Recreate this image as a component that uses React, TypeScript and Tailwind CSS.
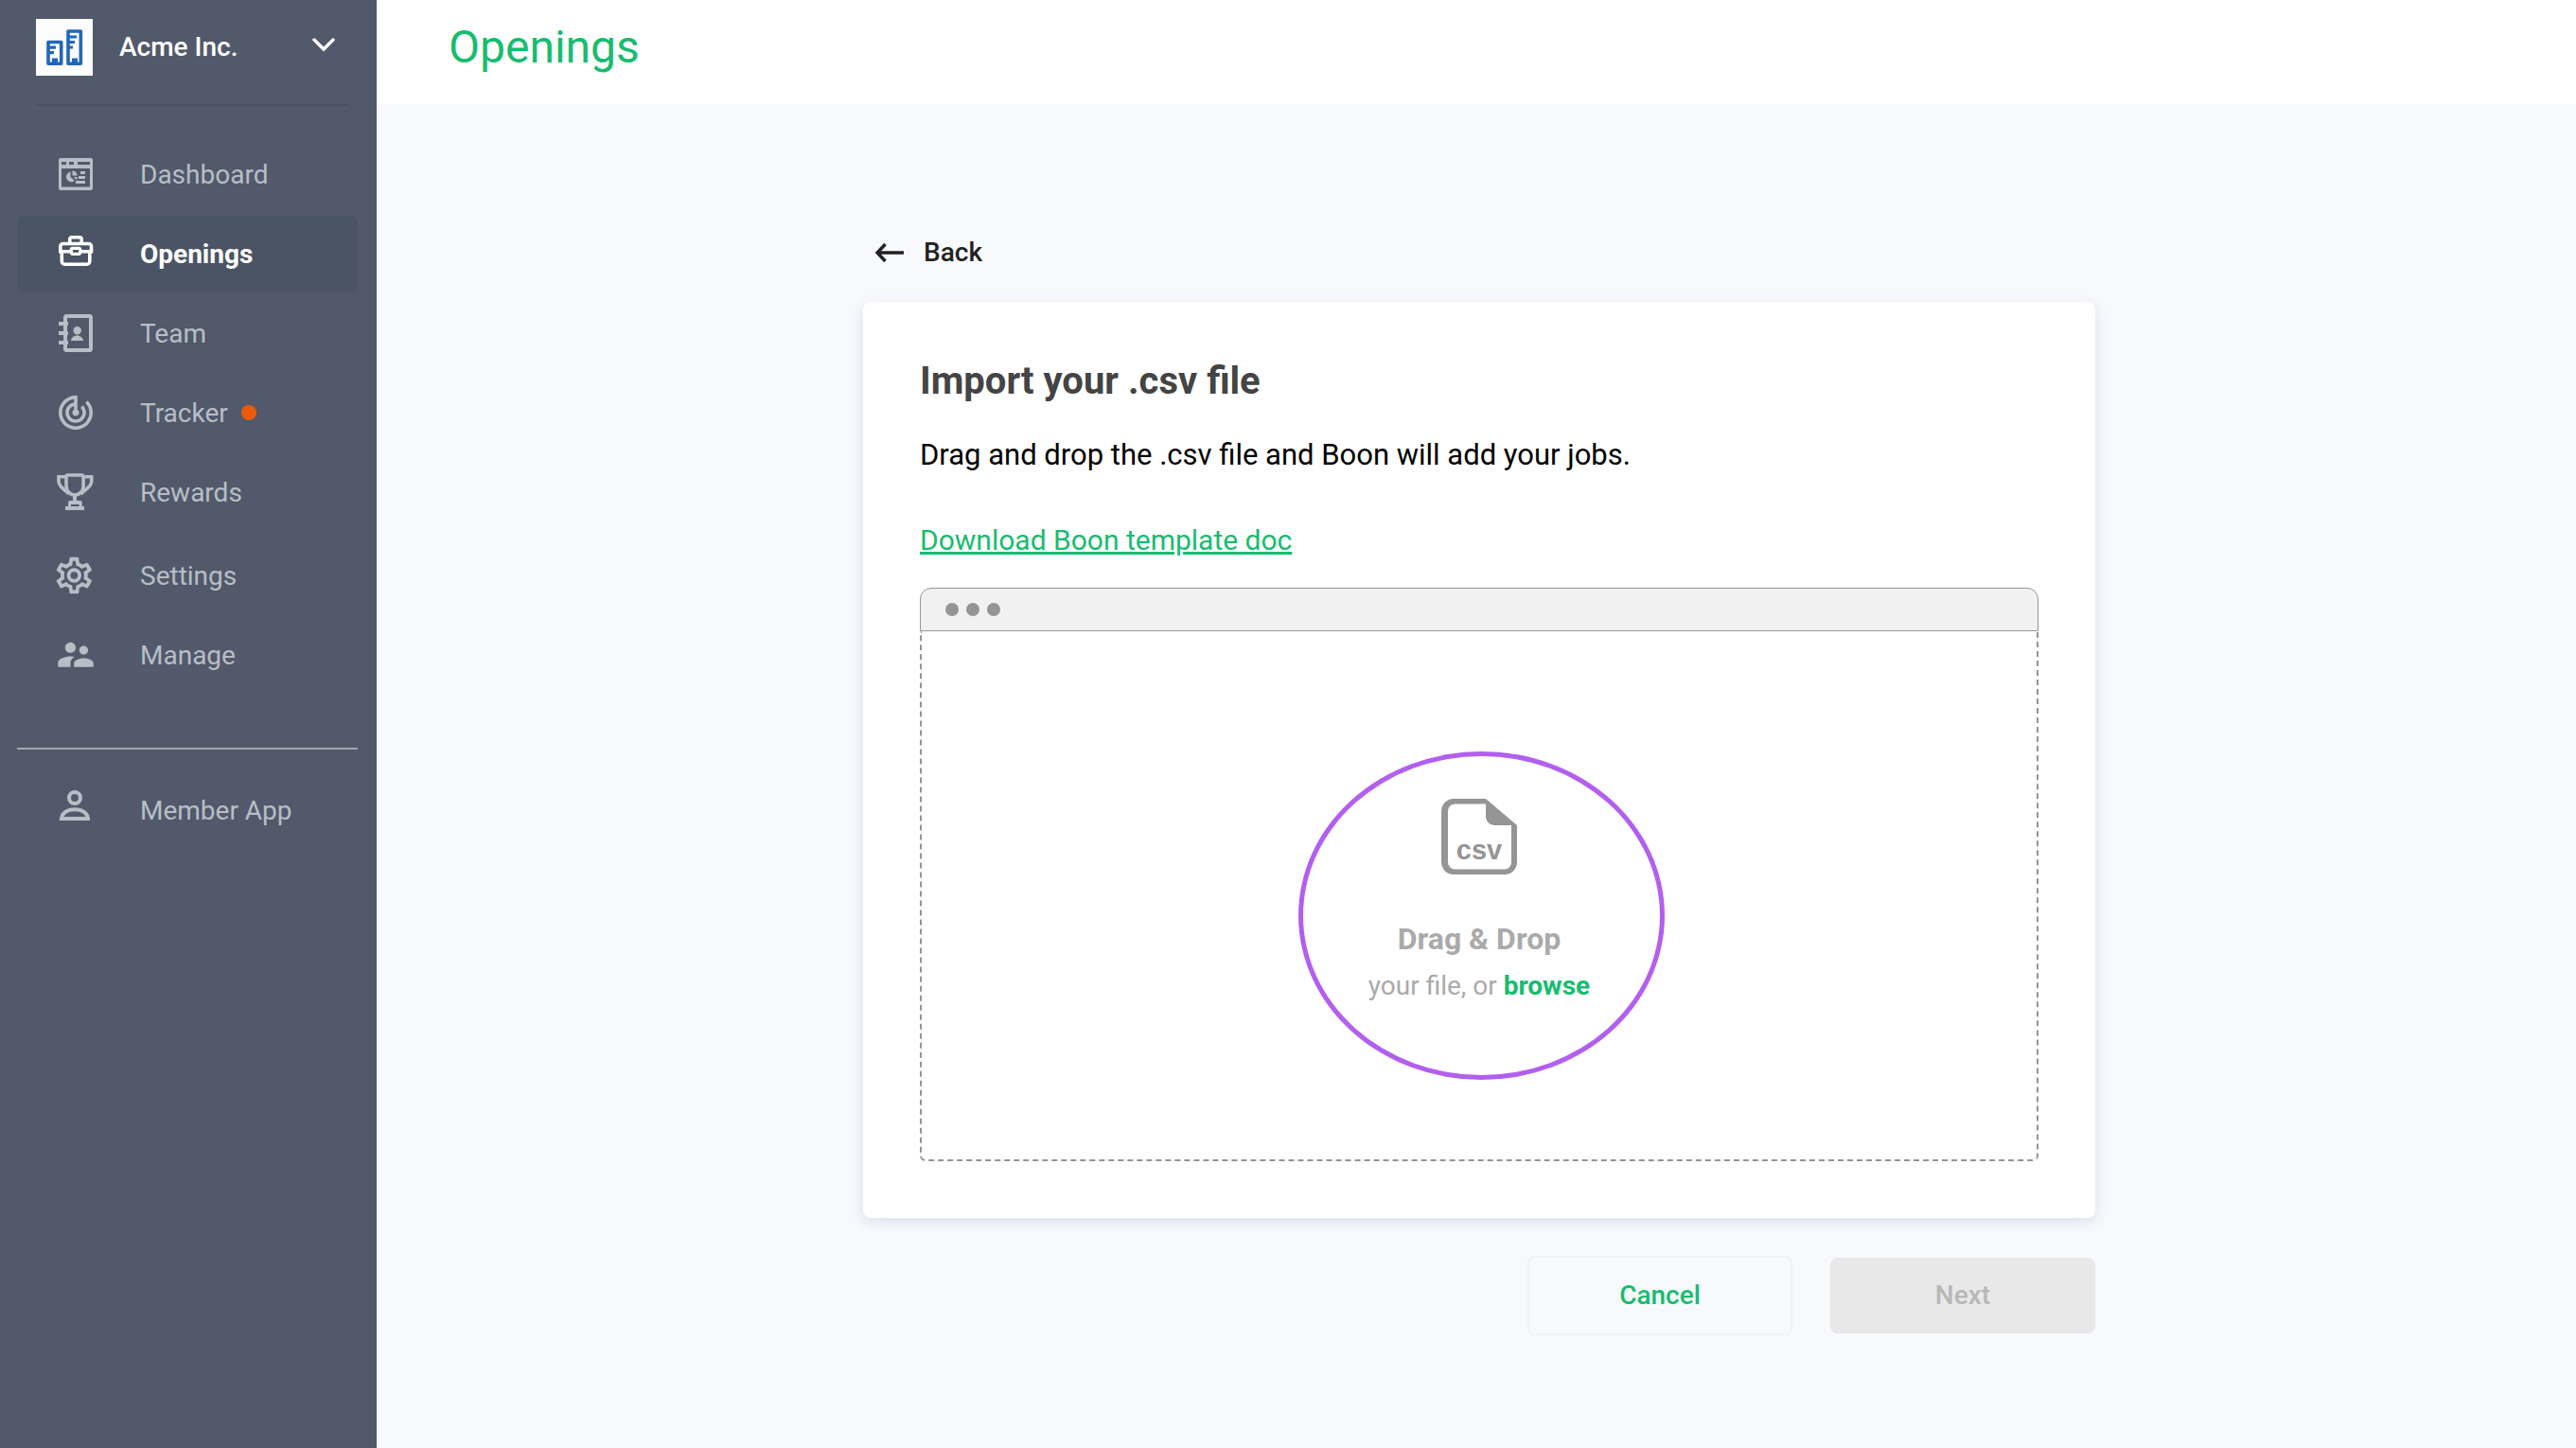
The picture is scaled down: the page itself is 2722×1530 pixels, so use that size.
import type { ReactNode } from "react";

type NavItem = {
  label: string;
  icon: ReactNode;
  active?: boolean;
  alert?: boolean;
};

function IconBox({ children }: { children: ReactNode }) {
  return (
    <svg className="size-12 shrink-0" viewBox="0 0 48 48" fill="none" aria-hidden="true">
      {children}
    </svg>
  );
}

function DashboardIcon() {
  return (
    <IconBox>
      <path
        fill="currentColor"
        fillRule="evenodd"
        d="M10 7H42a2 2 0 0 1 2 2V39a2 2 0 0 1-2 2H10a2 2 0 0 1-2-2V9a2 2 0 0 1 2-2ZM11 11V14H16V11ZM19 11V14H24V11ZM28 11V14H41V11ZM11 18V37.500H41V18Z"
      />
      <path fill="currentColor" d="M20.500 21.500V27L24.800 31A5.400 5.400 0 1 1 20.500 21.500ZM22.500 20.500A5 5 0 0 1 27.500 25.500H22.500ZM24 27H28A5 5 0 0 1 26.500 30Z" />
      <path fill="currentColor" d="M31 21H36V24H31ZM29 26H36V29H29ZM26 31H36V34H26Z" />
    </IconBox>
  );
}

function BriefcaseIcon() {
  return (
    <IconBox>
      <g stroke="currentColor" strokeWidth="3.600">
        <path d="M19.800 13.500V8.500a1.700 1.700 0 0 1 1.700-1.700H30.500a1.700 1.700 0 0 1 1.700 1.700V13.500" />
        <path d="M20 21.800H9.800V16.500a3 3 0 0 1 3-3H39.500a3 3 0 0 1 3 3V21.800H32" />
        <path d="M11.300 22V32.200a3 3 0 0 0 3 3H37.800a3 3 0 0 0 3-3V22" />
        <rect x="21.300" y="18.300" width="9.400" height="6" rx="1.500" strokeWidth="3.200" />
      </g>
    </IconBox>
  );
}

function TeamIcon() {
  return (
    <IconBox>
      <rect x="15" y="6" width="27" height="36" rx="1.500" stroke="currentColor" strokeWidth="4" />
      <path fill="currentColor" d="M8 12H18V16H8ZM8 22H18V26H8ZM8 32H18V36H8ZM21 32C21 29 24 26.500 27.500 26.500S34 29 34 32Z" />
      <circle cx="27.700" cy="21.300" r="4.200" fill="currentColor" />
    </IconBox>
  );
}

function TrackerIcon() {
  return (
    <IconBox>
      <path
        transform="translate(4.400 2.400) scale(1.800)"
        fill="currentColor"
        d="M19.070 4.930l-1.410 1.410C19.100 7.790 20 9.790 20 12c0 4.420-3.580 8-8 8s-8-3.580-8-8c0-4.080 3.050-7.440 7-7.930v2.020C8.160 6.570 6 9.030 6 12c0 3.310 2.690 6 6 6s6-2.690 6-6c0-1.660-.67-3.160-1.760-4.240l-1.410 1.410C15.550 9.900 16 10.900 16 12c0 2.210-1.790 4-4 4s-4-1.790-4-4c0-1.860 1.280-3.410 3-3.860v2.140c-.6.35-1 .98-1 1.720 0 1.100.9 2 2 2s2-.9 2-2c0-.74-.4-1.380-1-1.720V2h-1C6.480 2 2 6.480 2 12s4.480 10 10 10 10-4.480 10-10c0-2.760-1.120-5.260-2.930-7.070z"
      />
    </IconBox>
  );
}

function TrophyIcon() {
  return (
    <IconBox>
      <path stroke="currentColor" strokeWidth="3.600" d="M17.800 6H32.500a1.600 1.600 0 0 1 1.600 1.600V17.500C34.100 23 30 27 25.200 27S16 23 16 17.500V7.600a1.600 1.600 0 0 1 1.600-1.600Z" />
      <path stroke="currentColor" strokeWidth="3.600" d="M15 7.800H8V13C8 18 14 21 19 26M35.500 7.800H42.700V13C42.700 18 36.500 21 31.500 26" />
      <path fill="currentColor" d="M23 28H27V34H23Z" />
      <path fill="currentColor" fillRule="evenodd" d="M20 33H31a1.700 1.700 0 0 1 1.700 1.700V39H35V43H15V39H18V35a2 2 0 0 1 2-2ZM21 37V39H29.500V37Z" />
    </IconBox>
  );
}

function SettingsIcon() {
  return (
    <IconBox>
      <path
        transform="translate(1.300 1) scale(1.920)"
        fill="currentColor"
        d="M12,8A4,4 0 0,1 16,12A4,4 0 0,1 12,16A4,4 0 0,1 8,12A4,4 0 0,1 12,8M12,10A2,2 0 0,0 10,12A2,2 0 0,0 12,14A2,2 0 0,0 14,12A2,2 0 0,0 12,10M10,22C9.75,22 9.54,21.82 9.5,21.58L9.13,18.93C8.5,18.68 7.96,18.34 7.44,17.94L4.95,18.95C4.73,19.03 4.46,18.95 4.34,18.73L2.34,15.27C2.21,15.05 2.27,14.78 2.46,14.63L4.57,12.97L4.5,12L4.57,11L2.46,9.37C2.27,9.22 2.21,8.95 2.34,8.73L4.34,5.27C4.46,5.05 4.73,4.96 4.95,5.05L7.44,6.05C7.96,5.66 8.5,5.32 9.13,5.07L9.5,2.42C9.54,2.18 9.75,2 10,2H14C14.25,2 14.46,2.18 14.5,2.42L14.87,5.07C15.5,5.32 16.04,5.66 16.56,6.05L19.05,5.05C19.27,4.96 19.54,5.05 19.66,5.27L21.66,8.73C21.79,8.95 21.73,9.22 21.54,9.37L19.43,11L19.5,12L19.43,13L21.54,14.63C21.73,14.78 21.79,15.05 21.66,15.27L19.66,18.73C19.54,18.95 19.27,19.04 19.05,18.95L16.56,17.95C16.04,18.34 15.5,18.68 14.87,18.93L14.5,21.58C14.46,21.82 14.25,22 14,22H10M11.25,4L10.88,6.61C9.68,6.86 8.62,7.5 7.85,8.39L5.44,7.35L4.69,8.65L6.8,10.2C6.4,11.37 6.4,12.64 6.8,13.8L4.68,15.36L5.43,16.66L7.86,15.62C8.63,16.5 9.68,17.14 10.87,17.38L11.24,20H12.76L13.13,17.39C14.32,17.14 15.37,16.5 16.14,15.62L18.57,16.66L19.32,15.36L17.2,13.81C17.6,12.64 17.6,11.37 17.2,10.2L19.31,8.65L18.56,7.35L16.15,8.39C15.38,7.5 14.32,6.86 13.12,6.62L12.75,4H11.25Z"
      />
    </IconBox>
  );
}

function ManageIcon() {
  return (
    <IconBox>
      <path
        transform="translate(3.600 1.300) scale(1.870)"
        fill="currentColor"
        d="M16.5 12c1.38 0 2.49-1.12 2.49-2.5S17.88 7 16.5 7C15.12 7 14 8.12 14 9.5s1.12 2.5 2.5 2.5zM9 11c1.66 0 2.99-1.34 2.99-3S10.66 5 9 5C7.34 5 6 6.34 6 8s1.34 3 3 3zm7.5 3c-1.83 0-5.5.92-5.5 2.75V19h11v-2.25c0-1.83-3.67-2.75-5.5-2.75zM9 13c-2.33 0-7 1.170-7 3.5V19h7v-2.25c0-.85.33-2.34 2.37-3.47C10.5 13.1 9.66 13 9 13z"
      />
    </IconBox>
  );
}

function MemberIcon() {
  return (
    <IconBox>
      <g stroke="currentColor" strokeWidth="4">
        <circle cx="25" cy="11" r="6" />
        <path d="M11 33C11.500 27 17 23.200 25 23.200S38.500 27 39 33Z" />
      </g>
    </IconBox>
  );
}

function CompanyLogo() {
  return (
    <svg className="size-15 shrink-0" viewBox="0 0 60 60" fill="none" aria-hidden="true">
      <rect width="60" height="60" fill="#fcfcfd" />
      <g stroke="#2167b9" strokeWidth="3.600" strokeLinejoin="round">
        <rect x="13" y="24.500" width="13.700" height="22.700" />
        <rect x="34" y="13" width="13.300" height="34.200" />
        <path d="M14 30.200H21M14 35.600H19" strokeWidth="3.200" />
        <path d="M35 19H43M35 24.500H41M35 30H39" strokeWidth="3.200" />
      </g>
      <path fill="#2167b9" d="M17 41.500H23V47H17ZM38 41.500H44V47H38Z" />
    </svg>
  );
}

function CsvFileIcon() {
  return (
    <svg className="size-20" viewBox="0 0 80 80" role="img" aria-label="csv file">
      <path
        fill="#959595"
        fillRule="evenodd"
        d="M13 0H47V5.500H14A7.500 7.500 0 0 0 7 13V67A7.500 7.500 0 0 0 14 74.500H67A7.500 7.500 0 0 0 74 67V28H80V67A13 13 0 0 1 67 80H13A13 13 0 0 1 0 67V13A13 13 0 0 1 13 0ZM47 0L80 28H56A9 9 0 0 1 47 19Z"
      />
      <text x="40" y="64" textAnchor="middle" fontSize="29" fontWeight="700" fill="#959595" className="font-['Liberation_Sans',sans-serif]">
        csv
      </text>
    </svg>
  );
}

const mainNav: NavItem[] = [
  { label: "Dashboard", icon: <DashboardIcon /> },
  { label: "Openings", icon: <BriefcaseIcon />, active: true },
  { label: "Team", icon: <TeamIcon /> },
  { label: "Tracker", icon: <TrackerIcon />, alert: true },
  { label: "Rewards", icon: <TrophyIcon /> },
];

const adminNav: NavItem[] = [
  { label: "Settings", icon: <SettingsIcon /> },
  { label: "Manage", icon: <ManageIcon /> },
];

function NavLink({ label, icon, active, alert }: NavItem) {
  return (
    <a
      href="#"
      aria-current={active ? "page" : undefined}
      className={
        active
          ? "flex h-20 items-center gap-[46px] rounded-lg bg-[#4b5465] pl-9 font-bold text-white"
          : "flex h-20 items-center gap-[46px] rounded-lg pl-9 text-[#b8bec5]"
      }
    >
      {icon}
      <span className="flex items-center gap-3.5">
        <span className="pt-0.5">{label}</span>
        {alert && <span className="size-4 rounded-full bg-[#ec5b08]" />}
      </span>
    </a>
  );
}

function Sidebar() {
  return (
    <aside className="flex w-[398px] shrink-0 flex-col bg-[#51596b] text-[28px]">
      <button
        type="button"
        className="mr-[30px] ml-[38px] flex h-28 items-center border-b-2 border-[#4b5465] pb-2.5 text-left font-medium text-white"
      >
        <CompanyLogo />
        <span className="ml-7 flex-1">Acme Inc.</span>
        <svg className="mr-3.5 mb-1 h-4 w-6" viewBox="0 0 24 16" fill="none" aria-hidden="true">
          <path d="M2 2L12 12L22 2" stroke="currentColor" strokeWidth="3.400" strokeLinecap="round" />
        </svg>
      </button>
      <nav className="mr-5 ml-[18px] mt-8 flex flex-col">
        <div className="flex flex-col gap-1">
          {mainNav.map((item) => (
            <NavLink key={item.label} {...item} />
          ))}
        </div>
        <div className="mt-2 flex flex-col gap-1">
          {adminNav.map((item) => (
            <NavLink key={item.label} {...item} />
          ))}
        </div>
        <div className="mt-[58px] border-t-2 border-[#a2a9ad] pt-6">
          <NavLink label="Member App" icon={<MemberIcon />} />
        </div>
      </nav>
    </aside>
  );
}

function DropZone() {
  return (
    <div className="mt-[31px]">
      <div className="flex h-[46px] items-center gap-2 rounded-t-xl border border-[#959595] bg-[#f1f1f1] pl-[26px]">
        <span className="size-3.5 rounded-full bg-[#959595]" />
        <span className="size-3.5 rounded-full bg-[#959595]" />
        <span className="size-3.5 rounded-full bg-[#959595]" />
      </div>
      <div className="relative flex min-h-[560px] flex-col items-center rounded-b-md border-2 border-t-0 border-dashed border-[#959595] pt-[177px]">
        <CsvFileIcon />
        <p className="mt-12 text-[32px] leading-10 font-bold text-[#aaaaaa]">Drag &amp; Drop</p>
        <p className="mt-2.5 text-[28px] leading-10 text-[#aaaaaa]">
          your file, or{" "}
          <button type="button" className="font-bold text-[#18bc70]">
            browse
          </button>
        </p>
        <div className="pointer-events-none absolute top-[127px] left-1/2 ml-[-191px] h-[347px] w-[387px] rounded-[50%] border-[5px] border-[#b25ff0]" />
      </div>
    </div>
  );
}

export default function App() {
  return (
    <div className="flex min-h-screen bg-[#f8f9fd] font-[Roboto,sans-serif]">
      <Sidebar />
      <div className="flex min-w-0 flex-1 flex-col">
        <header className="flex h-[110px] items-center bg-white pb-2.5 pl-[76px]">
          <h1 className="text-[48px] leading-14 text-[#18bc70]">Openings</h1>
        </header>
        <main className="flex flex-1 justify-center pt-34 pl-1.5">
          <div className="w-full max-w-[1302px]">
            <button type="button" className="ml-3 flex h-10 items-center gap-5 text-[28px] font-medium text-[#222222]">
              <svg className="h-6 w-8" viewBox="0 0 32 24" fill="none" aria-hidden="true">
                <path d="M31 13H4M11.500 4L3 13L11.500 22" stroke="currentColor" strokeWidth="3.400" />
              </svg>
              <span className="pt-0.5">Back</span>
            </button>
            <section className="mt-[33px] rounded-lg bg-white p-15 shadow-[0_4px_14px_rgba(60,64,120,0.14)]">
              <h2 className="text-[40px] leading-12 font-bold text-[#444444]">Import your .csv file</h2>
              <p className="mt-[35px] text-[31px] leading-[38px] text-black">
                Drag and drop the .csv file and Boon will add your jobs.
              </p>
              <p className="mt-13 text-[30px] leading-[38px]">
                <a href="#" className="text-[#18bc70] underline">
                  Download Boon template doc
                </a>
              </p>
              <DropZone />
            </section>
            <div className="mt-10 flex items-center justify-end gap-10 text-[28px] font-medium">
              <button type="button" className="h-[84px] w-[280px] rounded-lg border-2 border-[#f1f2f2] text-[#18bc70]">
                Cancel
              </button>
              <button type="button" disabled className="h-20 w-[280px] rounded-lg bg-[#e8e8e8] text-[#b7b7b7]">
                Next
              </button>
            </div>
          </div>
        </main>
      </div>
    </div>
  );
}
